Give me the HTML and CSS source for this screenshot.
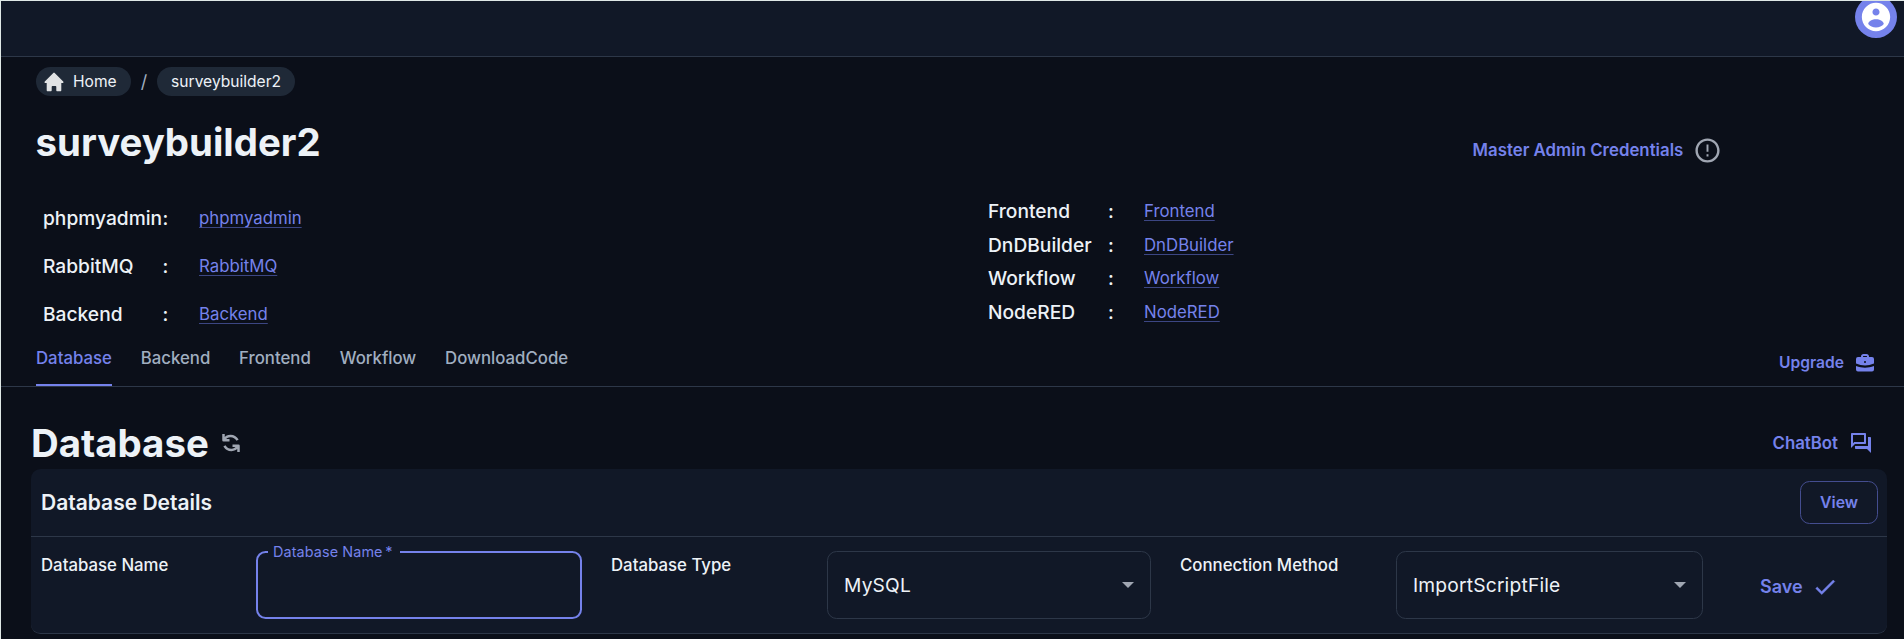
FILE: index.html
```html
<!DOCTYPE html>
<html lang="en">
<head>
<meta charset="utf-8">
<title>surveybuilder2</title>
<link rel="stylesheet" href="styles.css">
</head>
<body>
<div class="app">
  <header class="topbar">
    <div class="avatar"><svg viewBox="0 0 24 24"><path d="M12 2C6.480 2 2 6.480 2 12s4.480 10 10 10 10-4.480 10-10S17.520 2 12 2zm0 4c1.380 0 2.500 1.120 2.500 2.500S13.380 11 12 11 9.500 9.880 9.500 8.500 10.620 6 12 6zm0 13.400c-2.300 0-4.300-.9-5.500-2.400 .1-2.200 3-3.500 5.500-3.500s5.400 1.300 5.500 3.500c-1.200 1.500-3.200 2.400-5.500 2.400z"/></svg></div>
  </header>
  <nav class="crumbs">
    <a class="chip home"><svg viewBox="0 0 20 20"><path d="M10.700.9a1 1 0 0 0-1.400 0l-8.500 8.500c-.6.600-.2 1.600.7 1.600H2.700v7.200c0 .6.400 1 1 1h3c.6 0 1-.4 1-1v-3.200c0-.6.400-1 1-1h2.600c.6 0 1 .4 1 1v3.200c0 .6.400 1 1 1h3c.6 0 1-.4 1-1V11h1.200c.9 0 1.300-1 .7-1.600z"/></svg>Home</a>
    <span class="slash">/</span>
    <a class="chip">surveybuilder2</a>
  </nav>
  <div class="title-row">
    <h1>surveybuilder2</h1>
    <div class="credentials"><span class="action">Master Admin Credentials</span><svg viewBox="0 0 24 24"><path d="M11.200 15h1.600v2h-1.600zm0-8h1.600v6h-1.600zm.790-5C6.470 2 2 6.480 2 12s4.470 10 9.990 10C17.520 22 22 17.520 22 12S17.520 2 11.990 2zM12 20c-4.420 0-8-3.580-8-8s3.580-8 8-8 8 3.580 8 8-3.580 8-8 8z"/></svg></div>
  </div>
  <div class="links">
    <dl class="left">
      <dt>phpmyadmin</dt><dd>:</dd><dd><a>phpmyadmin</a></dd>
      <dt>RabbitMQ</dt><dd>:</dd><dd><a>RabbitMQ</a></dd>
      <dt>Backend</dt><dd>:</dd><dd><a>Backend</a></dd>
    </dl>
    <dl class="right">
      <dt>Frontend</dt><dd>:</dd><dd><a>Frontend</a></dd>
      <dt>DnDBuilder</dt><dd>:</dd><dd><a>DnDBuilder</a></dd>
      <dt>Workflow</dt><dd>:</dd><dd><a>Workflow</a></dd>
      <dt>NodeRED</dt><dd>:</dd><dd><a>NodeRED</a></dd>
    </dl>
  </div>
  <div class="tabbar">
    <div class="tabs">
      <span class="tab active">Database</span><span class="tab">Backend</span><span class="tab">Frontend</span><span class="tab">Workflow</span><span class="tab">DownloadCode</span>
    </div>
    <div class="upgrade"><span class="action">Upgrade</span><svg viewBox="0 0 20 20"><path fill-rule="evenodd" d="M6 4V3.500C6 2 7 1 8.500 1h3C13 1 14 2 14 3.500V4h3a2 2 0 0 1 2 2v4.500c-3 1.300-6 2-9 2s-6-.7-9-2V6a2 2 0 0 1 2-2zM8 4h4v-.5a.5.500 0 0 0-.5-.5h-3a.5.500 0 0 0-.5.500zM10 8a1 1 0 1 0 0 2 1 1 0 0 0 0-2zM1 13c3 1.200 6 1.700 9 1.700s6-.5 9-1.700v3.500a2 2 0 0 1-2 2H3a2 2 0 0 1-2-2z"/></svg></div>
  </div>
  <div class="section-head">
    <h2>Database</h2>
    <svg class="sync" viewBox="0 0 18 20"><g fill="none" stroke="currentColor" stroke-width="2.500" stroke-linejoin="round"><path d="M1.500 1v6.200h6M2 6.800C5 2 12 1.500 15.600 7.200"/><path d="M16.500 19v-6.200h-6M16 13.200C13 18 6 18.500 2.400 12.800"/></g></svg>
    <div class="chatbot"><span class="action">ChatBot</span><svg viewBox="0 0 24 24"><path d="M15 4v7H5.170L4 12.170V4h11m1-2H3c-.55 0-1 .45-1 1v14l4-4h10c.55 0 1-.45 1-1V3c0-.55-.45-1-1-1m5 4h-2v9H6v2c0 .55.450 1 1 1h11l4 4V7c0-.55-.45-1-1-1"/></svg></div>
  </div>
  <section class="card">
    <div class="card-head"><h3>Database Details</h3><button class="view">View</button></div>
    <div class="form">
      <label class="name1">Database Name</label>
      <div class="field focused"><span class="legend">Database Name&thinsp;*</span></div>
      <label class="name2">Database Type</label>
      <div class="field"><span>MySQL</span><i class="arrow"></i></div>
      <label class="name3">Connection Method</label>
      <div class="field"><span>ImportScriptFile</span><i class="arrow"></i></div>
      <div class="save"><span class="action">Save</span><svg viewBox="0 0 24 24"><path stroke="currentColor" stroke-width=".4" d="M9 16.170 4.830 12l-1.420 1.410L9 19 21 7l-1.410-1.410z"/></svg></div>
    </div>
  </section>
</div>
</body>
</html>
```
FILE: styles.css
```css
* { box-sizing: border-box; }
body { margin: 0; background: #0b0f19; color: #edf2f7; font-family: Inter, "Liberation Sans", sans-serif; }
h1, h2, h3, dl, dt, dd { margin: 0; }
svg { display: block; fill: currentColor; flex: none; }
.app { width: 1904px; height: 639px; overflow: hidden; border: solid #dfe8e6; border-width: 1px 0 0 1px; }
.topbar { height: 56px; background: #111827; border-bottom: 1px solid #2d3748; display: flex; justify-content: flex-end; padding-right: 7px; }
.avatar { width: 42px; height: 42px; margin-top: -5px; border-radius: 50%; background: #7582eb; color: #fff; display: flex; align-items: center; justify-content: center; }
.avatar svg { width: 34px; height: 34px; margin-right: 1px; }
.crumbs { display: flex; align-items: center; margin: 10px 0 0 35px; font-size: 15.600px; height: 29px; }
.chip { height: 29px; border-radius: 15px; background: #1f2937; padding: 0 14px; display: flex; align-items: center; }
.home { padding-left: 8px; padding-right: 14.400px; }
.home svg { width: 20px; height: 20px; margin-right: 9px; color: #e0e2e4; }
.slash { color: #a0aec0; width: 26px; text-align: center; font-size: 18px; }
.title-row { display: flex; align-items: center; height: 76px; margin-top: 12px; padding-left: 35px; }
h1, h2 { font-size: 38.400px; font-weight: 700; line-height: 46px; }
.title-row h1 { width: 1437px; height: 54px; margin-left: -.5px; }
.action { color: #7582eb; font-weight: 600; font-size: 16.800px; line-height: 24px; }
.credentials { display: flex; align-items: center; gap: 10px; color: #a0a6b2; margin-top: 8px; }
.credentials .action { letter-spacing: .03px; }
.credentials svg { width: 29px; height: 29px; }
.links { display: flex; height: 156px; padding-left: 42px; }
.links dl { display: grid; align-items: center; align-content: start; }
.left { grid-template-columns: 119.500px 36.500px 1fr; grid-auto-rows: 48px; width: 945px; margin-top: 10px; }
.right { grid-template-columns: 120px 36px 1fr; grid-auto-rows: 33.600px; margin-top: 10.400px; }
dt, dd { font-size: 19.200px; font-weight: 500; line-height: 28px; }
dd a { font-size: 16.800px; font-weight: 400; color: #7582eb; text-decoration: underline; text-decoration-color: #3c4683; text-underline-offset: 3px; text-decoration-thickness: 1px; display: block; line-height: 26px; }
.tabbar { display: flex; justify-content: space-between; height: 47px; border-bottom: 1px solid #2d3748; padding: 0 29px 0 35px; }
.tabs { display: flex; gap: 28.800px; height: 46px; }
.tab { color: #a0aec0; font-size: 16.800px; font-weight: 500; line-height: 36px; }
.active { color: #7582eb; border-bottom: 2px solid #7582eb; }
.upgrade, .chatbot, .save { display: flex; align-items: center; gap: 11px; color: #7582eb; }
.upgrade .action { font-size: 15.600px; }
.upgrade svg { width: 20px; height: 20px; }
.section-head { display: flex; align-items: center; height: 82px; padding: 29px 31px 0 30px; }
.sync { width: 18px; height: 20px; margin-left: 13px; color: #a0a6b2; }
.chatbot { margin-left: auto; }
.chatbot svg { width: 24px; height: 24px; }
.card { margin: 0 17px 0 30px; height: 165px; background: #111827; border-radius: 9.600px; border-bottom: 1px solid #2d3748; }
.card-head { height: 68px; border-bottom: 1px solid #2d3748; display: flex; align-items: center; justify-content: space-between; padding: 0 9px 0 10px; }
h3 { font-size: 21px; font-weight: 600; }
.view { width: 78px; height: 43px; border: 1px solid #444d8f; border-radius: 9.600px; background: none; color: #7582eb; font: 600 15.800px Inter, sans-serif; padding: 0; }
.form { display: grid; grid-template-columns: 215px 326px 245px 324px 245px 307px 1fr; padding: 14px 0 0 10px; }
.form label { font-size: 16.800px; font-weight: 500; line-height: 28px; }
.name2, .name3 { padding-left: 29px; }
.field { position: relative; height: 68px; border: 1px solid #2d3748; border-radius: 9.600px; display: flex; align-items: center; justify-content: space-between; padding: 0 16px; font-size: 19.200px; letter-spacing: .2px; }
.focused { border: 2px solid #7582eb; }
.legend { position: absolute; top: -11px; left: 10px; width: 132px; padding-left: 5px; background: #111827; color: #7582eb; font-size: 14.400px; line-height: 20px; letter-spacing: .1px; }
.arrow { border: 6px solid transparent; border-top-color: #a0a6b2; border-bottom: 0; }
.save { margin-left: 57px; padding-top: 3px; gap: 9px; }
.save .action { font-size: 18px; }
.save svg { width: 26px; height: 26px; }
```
